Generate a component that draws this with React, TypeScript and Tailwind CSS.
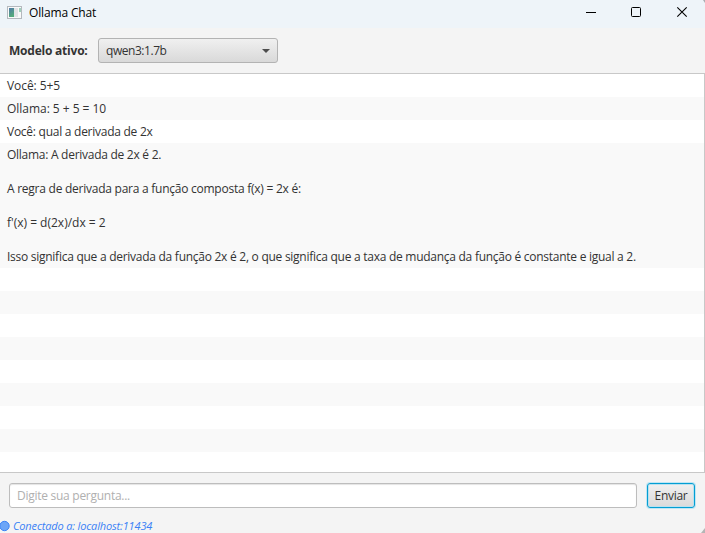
import React from "react";

type Line = { text: string; tracking?: string };

const messages: Line[][] = [
  [{ text: "Você: 5+5", tracking: "tracking-[-0.08px]" }],
  [{ text: "Ollama: 5 + 5 = 10", tracking: "tracking-[-0.03px]" }],
  [{ text: "Você: qual a derivada de 2x", tracking: "tracking-[-0.26px]" }],
  [
    { text: "Ollama: A derivada de 2x é 2.", tracking: "tracking-[-0.27px]" },
    { text: "" },
    { text: "A regra de derivada para a função composta f(x) = 2x é:", tracking: "tracking-[-0.25px]" },
    { text: "" },
    { text: "f'(x) = d(2x)/dx = 2", tracking: "tracking-[0px]" },
    { text: "" },
    {
      text: "Isso significa que a derivada da função 2x é 2, o que significa que a taxa de mudança da função é constante e igual a 2.",
      tracking: "tracking-[-0.266px]",
    },
  ],
];

const emptyRows = Array.from({ length: 9 });

function TitleBar() {
  return (
    <header className="flex h-7 shrink-0 items-center bg-[#eef4f9] text-black">
      <svg className="mb-px ml-[7px] h-[15px] w-4 shrink-0" viewBox="0 0 16 15">
        <defs>
          <linearGradient id="pane" x1="0" y1="0" x2="0.4" y2="1">
            <stop offset="0" stopColor="#5279a8" />
            <stop offset="1" stopColor="#55ab7c" />
          </linearGradient>
        </defs>
        <rect x="0.5" y="0.5" width="14" height="12" fill="#fafafa" stroke="#b4b9be" />
        <rect x="2" y="2" width="5" height="9" fill="url(#pane)" />
        <rect x="7" y="2" width="4" height="9" fill="#e2e4e6" />
        <rect x="12" y="2" width="2" height="4" fill="#9fd0bc" />
      </svg>
      <span className="mb-0.5 ml-1.5 text-[12px] leading-4 tracking-[-0.15px]">Ollama Chat</span>
      <div className="ml-auto flex items-center">
        <svg className="h-7 w-[45px]" viewBox="0 0 45 28" shapeRendering="crispEdges">
          <path d="M16 12.5h10" stroke="#000" />
        </svg>
        <svg className="h-7 w-[45px]" viewBox="0 0 45 28">
          <rect x="16.5" y="7.5" width="9" height="9" rx="1" fill="none" stroke="#000" />
        </svg>
        <svg className="h-7 w-[45px]" viewBox="0 0 45 28">
          <path d="M17.3 7.3l9.4 9.4M26.7 7.3l-9.4 9.4" stroke="#000" strokeWidth="1.1" />
          <path d="M43 0h2v3z" fill="#a9adb1" />
        </svg>
      </div>
    </header>
  );
}

function ModelBar() {
  return (
    <div className="flex h-[45px] shrink-0 items-center pl-[9px]">
      <span className="w-[89px] text-[12px] font-bold tracking-[-0.22px] whitespace-nowrap">Modelo ativo:</span>
      <button className="flex h-[25px] w-[180px] items-center justify-between rounded-[3px] border border-[#b3b3b3] bg-linear-to-b from-[#f0f0f0] to-[#d9d9d9] px-[7px] text-[12px] tracking-[-0.45px]">
        <span>qwen3:1.7b</span>
        <svg className="h-1 w-2" viewBox="0 0 8 4">
          <path d="M0 0h8L4 4z" fill="#4d4d4d" />
        </svg>
      </button>
    </div>
  );
}

function MessageList() {
  return (
    <main className="flex h-[400px] shrink-0 flex-col overflow-hidden border-y border-r border-[#c8c8c8] text-[12px] leading-[17px]">
      {messages.map((lines, i) => (
        <div key={i} className="shrink-0 py-[3px] pl-[7px] odd:bg-white even:bg-[#f9f9f9]">
          {lines.map((line, j) => (
            <p key={j} className={`h-[17px] whitespace-nowrap ${line.tracking ?? ""}`}>{line.text}</p>
          ))}
        </div>
      ))}
      {emptyRows.map((_, i) => (
        <div key={i} className="h-[23px] shrink-0 odd:bg-white even:bg-[#f9f9f9]" />
      ))}
    </main>
  );
}

export default function App() {
  return (
    <div className="flex h-[533px] w-[705px] flex-col overflow-hidden bg-[#f4f4f4] font-['Open_Sans','Noto_Sans',sans-serif] text-[#333]">
      <TitleBar />
      <ModelBar />
      <MessageList />
      <div className="flex h-[45px] shrink-0 items-center gap-[10px] pl-[9px] text-[12px]">
        <input
          className="h-[25px] w-[628px] rounded-[3px] border border-[#bdbdbd] bg-white px-[7px] tracking-[-0.27px] shadow-[inset_0_1px_1px_#e4e4e4] outline-none placeholder:text-[#b0b0b0]"
          placeholder="Digite sua pergunta..."
        />
        <button className="h-[25px] w-12 rounded-[3px] border border-[#039ed3] bg-linear-to-b from-[#f0f0f0] to-[#dadada] tracking-[-0.3px] shadow-[0_0_0_1px_#bfe6f4,inset_0_0_0_1px_#b9e1ef]">
          Enviar
        </button>
      </div>
      <footer className="flex h-[15px] items-center text-[11px] leading-[15px] text-[#3b82f6] italic">
        <svg className="mr-[3px] h-3 w-2.5" viewBox="0 0 10 12">
          <circle cx="4.5" cy="6" r="4.7" fill="#6ca5f7" stroke="#3b82f6" />
        </svg>
        <span className="tracking-[-0.15px]">Conectado a: localhost:11434</span>
        <svg className="ml-auto h-[15px] w-1" viewBox="0 0 4 15">
          <path d="M4 10v5H0z" fill="#b5b5b5" />
        </svg>
      </footer>
    </div>
  );
}
